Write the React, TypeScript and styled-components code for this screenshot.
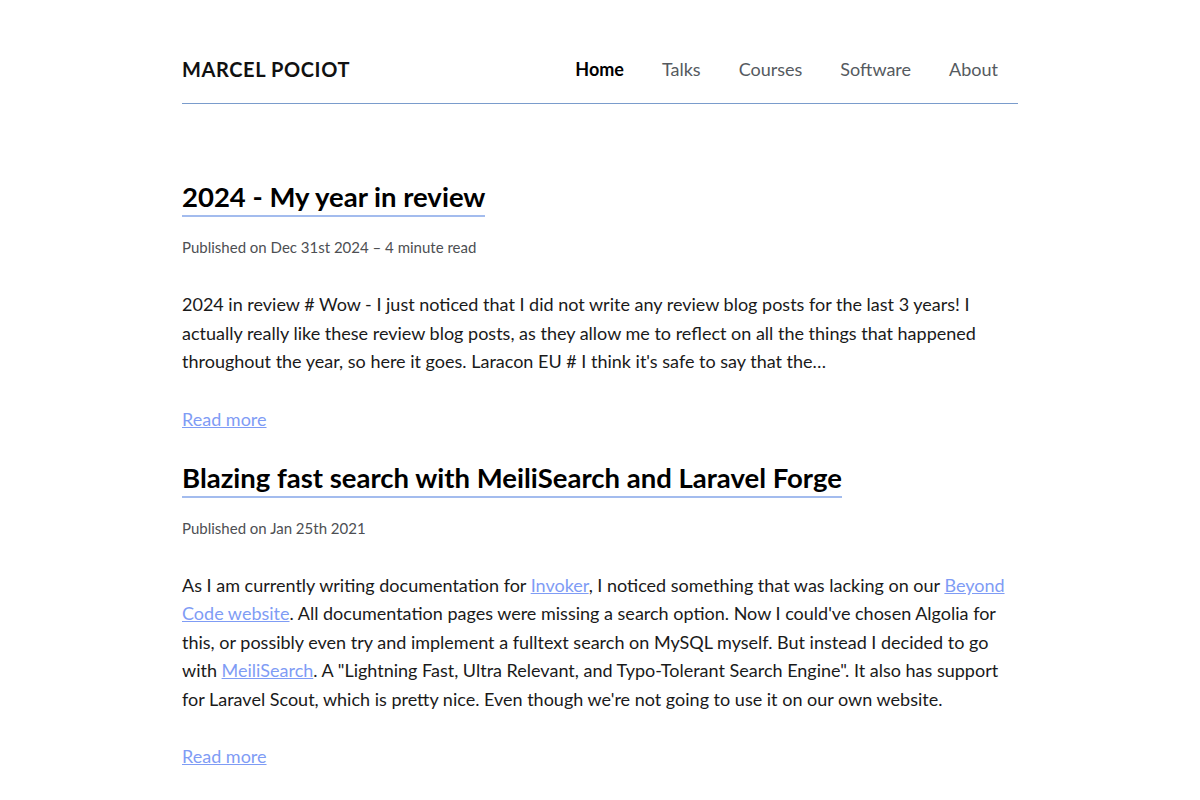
import styled, { createGlobalStyle } from "styled-components";

const GlobalStyle = createGlobalStyle`
  body {
    margin: 0;
    background: #ffffff;
    color: #1a1a1a;
    font-family: Lato, "Liberation Sans", sans-serif;
  }
`;

const Page = styled.div`
  width: 836px;
  margin: 0 auto;
  padding-top: 40px;
`;

const Header = styled.header`
  display: flex;
  justify-content: space-between;
  align-items: center;
  height: 58px;
  padding-bottom: 5px;
  border-bottom: 1px solid #7a9ccc;
`;

const Logo = styled.a`
  font-size: 20px;
  font-weight: 700;
  letter-spacing: 0.6px;
  color: #111;
  text-decoration: none;
`;

const Nav = styled.nav`
  display: flex;
  padding-right: 1px;
`;

const NavLink = styled.a<{ active?: boolean }>`
  padding: 0 19px;
  font-size: 18px;
  font-weight: ${({ active }) => (active ? 700 : 400)};
  color: ${({ active }) => (active ? "#000" : "#555a60")};
  text-decoration: none;
`;

const Posts = styled.main`
  padding-top: 76px;
`;

const Post = styled.article`
  margin-bottom: 31px;
`;

const Title = styled.h2`
  display: inline-block;
  margin: 0;
  padding-bottom: 1px;
  font-size: 27.5px;
  font-weight: 700;
  line-height: 34px;
  color: #000;
  border-bottom: 2px solid #a3bcee;
`;

const Meta = styled.p`
  margin: 21px 0 0;
  font-size: 15px;
  color: #4d4f53;
`;

const Excerpt = styled.p`
  margin: 34px 0 0;
  font-size: 18px;
  line-height: 28.5px;
  color: #1a1a1a;
`;

const Link = styled.a`
  color: #7f9cf5;
  text-decoration: underline;
`;

const ReadMore = styled.a`
  display: inline-block;
  margin-top: 32px;
  font-size: 18px;
  color: #7f9cf5;
  text-decoration: underline;
`;

const navItems = ["Home", "Talks", "Courses", "Software", "About"];

export default function App() {
  return (
    <>
      <GlobalStyle />
      <Page>
        <Header>
          <Logo href="#">MARCEL POCIOT</Logo>
          <Nav>
            {navItems.map((item) => (
              <NavLink key={item} href="#" active={item === "Home"}>
                {item}
              </NavLink>
            ))}
          </Nav>
        </Header>
        <Posts>
          <Post>
            <Title>2024 - My year in review</Title>
            <Meta>Published on Dec 31st 2024 – 4 minute read</Meta>
            <Excerpt>
              2024 in review # Wow - I just noticed that I did not write any
              review blog posts for the last 3 years! I actually really like
              these review blog posts, as they allow me to reflect on all the
              things that happened throughout the year, so here it goes.
              Laracon EU # I think it's safe to say that the…
            </Excerpt>
            <ReadMore href="#">Read more</ReadMore>
          </Post>
          <Post>
            <Title>Blazing fast search with MeiliSearch and Laravel Forge</Title>
            <Meta>Published on Jan 25th 2021</Meta>
            <Excerpt>
              As I am currently writing documentation for{" "}
              <Link href="#">Invoker</Link>, I noticed something that was
              lacking on our <Link href="#">Beyond Code website</Link>. All
              documentation pages were missing a search option. Now I could've
              chosen Algolia for this, or possibly even try and implement a
              fulltext search on MySQL myself. But instead I decided to go with{" "}
              <Link href="#">MeiliSearch</Link>. A "Lightning Fast, Ultra
              Relevant, and Typo-Tolerant Search Engine". It also has support
              for Laravel Scout, which is pretty nice. Even though we're not
              going to use it on our own website.
            </Excerpt>
            <ReadMore href="#">Read more</ReadMore>
          </Post>
        </Posts>
      </Page>
    </>
  );
}
